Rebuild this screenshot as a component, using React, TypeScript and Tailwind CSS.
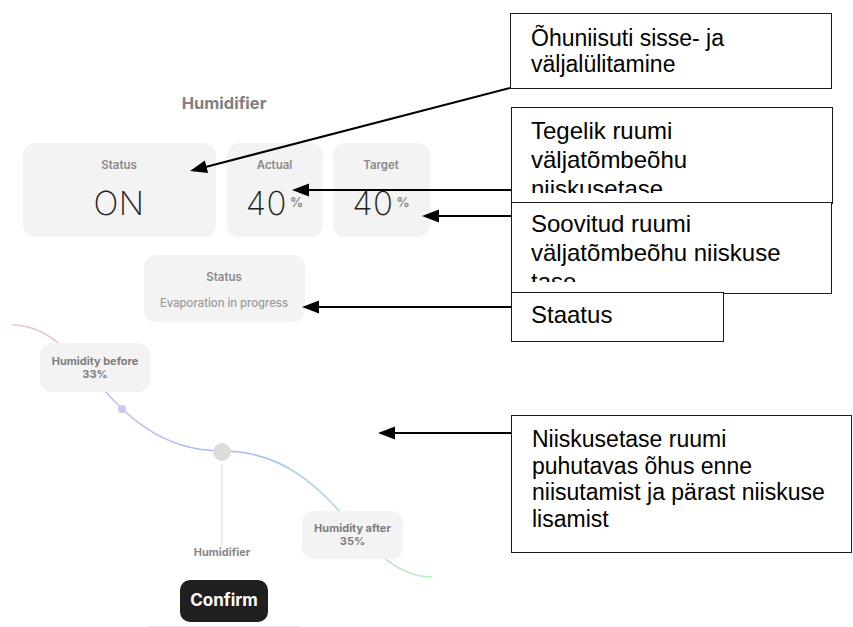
import React from "react";

type ArrowProps = { x1: number; y1: number; x2: number; y2: number };

// callout arrow: line from the tail, filled triangle at the tip
function Arrow({ x1, y1, x2, y2 }: ArrowProps) {
  const len = 17;
  const half = 6.5;
  const dx = x2 - x1;
  const dy = y2 - y1;
  const d = Math.hypot(dx, dy);
  const ux = dx / d;
  const uy = dy / d;
  const bx = x2 - ux * len;
  const by = y2 - uy * len;
  const pts = `${x2},${y2} ${bx - uy * half},${by + ux * half} ${bx + uy * half},${by - ux * half}`;
  return (
    <g>
      <line x1={x1} y1={y1} x2={bx + ux * 2} y2={by + uy * 2} stroke="#000" strokeWidth={2} />
      <polygon points={pts} fill="#000" />
    </g>
  );
}

function StatCard({ label, value, unit, width }: { label: string; value: string; unit?: string; width: string }) {
  return (
    <div className={`${width} h-[94px] rounded-[12px] bg-[#f3f3f3] flex flex-col items-center pt-[15px]`}>
      <div className="text-[11.5px] leading-[14px] font-semibold text-[#8a8a8a]">{label}</div>
      <div className="mt-[15px] flex items-start">
        <span className="text-[33px] leading-[32px] font-extralight text-[#222222] tracking-[0.5px]">{value}</span>
        {unit && <span className="ml-[3px] mt-[9px] text-[13px] leading-[13px] font-bold text-[#8a8a8a]">{unit}</span>}
      </div>
    </div>
  );
}

// text box like a slide annotation: inner area clips the overflowing line
function Callout({ className, inner, lines }: { className: string; inner: string; lines: string[] }) {
  return (
    <div
      className={`absolute bg-white border-[1.5px] border-[#1a1a1a] font-['Liberation_Sans',Arial,sans-serif] text-black ${className}`}
    >
      <div className={`overflow-hidden ${inner}`}>
        {lines.map((l) => (
          <div key={l} className="whitespace-nowrap">
            {l}
          </div>
        ))}
      </div>
    </div>
  );
}

export default function App() {
  return (
    <div className="relative w-[853px] h-[627px] bg-white overflow-hidden font-['Inter',sans-serif]">
      {/* App screen */}
      <div className="w-[448px] flex flex-col items-center pt-[93px]">
        <div className="text-[16.5px] leading-5 font-bold text-[#808080]">Humidifier</div>

        <div className="mt-[30px] ml-[4px] flex">
          <StatCard label="Status" value="ON" width="w-[193px]" />
          <div className="w-[11px]" />
          <StatCard label="Actual" value="40" unit="%" width="w-[96px]" />
          <div className="w-[10px]" />
          <StatCard label="Target" value="40" unit="%" width="w-[97px]" />
        </div>

        <div className="mt-[18px] w-[161px] h-[67px] rounded-[12px] bg-[#f3f3f3] flex flex-col items-center pt-[15px]">
          <div className="text-[11.5px] leading-[14px] font-semibold text-[#8a8a8a]">Status</div>
          <div className="mt-[11px] text-[11.3px] leading-4 font-medium text-[#9b9b9b]">Evaporation in progress</div>
        </div>

        {/* humidity flow diagram */}
        <div className="relative w-[448px] h-[258px]">
          <svg className="absolute inset-0" width="448" height="258" viewBox="0 0 448 258">
            <defs>
              <linearGradient id="flow" gradientUnits="userSpaceOnUse" x1="12" y1="0" x2="432" y2="0">
                <stop offset="0" stopColor="#f4c4ce" />
                <stop offset="0.25" stopColor="#c8b9f2" />
                <stop offset="0.5" stopColor="#a9b5fb" />
                <stop offset="0.78" stopColor="#a6d8e2" />
                <stop offset="1" stopColor="#b8f2bf" />
              </linearGradient>
            </defs>
            <path
              d="M12 3 C87.5 3 106.5 129 222 129 C337.5 129 356.5 255 432 255"
              fill="none"
              stroke="url(#flow)"
              strokeWidth={1.5}
            />
            <circle cx="122" cy="87" r="4" fill="#cdc3f1" />
            <line x1="222" y1="143" x2="222" y2="223" stroke="#e4e4e4" strokeWidth={1.5} />
            <circle cx="222" cy="130" r="9" fill="#dddddd" />
          </svg>

          <div className="absolute left-[40px] top-[21px] w-[110px] h-[49px] rounded-[12px] bg-[#f3f3f3] flex flex-col items-center justify-center text-[11px] leading-[13px] font-bold text-[#7d7d7d]">
            <span>Humidity before</span>
            <span>33%</span>
          </div>
          <div className="absolute left-[302px] top-[189px] w-[101px] h-[48px] rounded-[12px] bg-[#f3f3f3] flex flex-col items-center justify-center text-[11px] leading-[13px] font-bold text-[#7d7d7d]">
            <span>Humidity after</span>
            <span>35%</span>
          </div>
          <div className="absolute left-[172px] top-[223px] w-[100px] text-center text-[11px] leading-[14px] font-bold text-[#888888]">
            Humidifier
          </div>
        </div>

        <button className="w-[88px] h-[42px] rounded-[10px] bg-[#1f1f1f] text-white text-[17px] font-bold">
          Confirm
        </button>
        <div className="mt-[4px] w-[153px] h-px bg-[#e6e6e6]" />
      </div>

      {/* Annotation overlay */}
      <svg className="absolute inset-0 pointer-events-none" width="853" height="627" viewBox="0 0 853 627">
        <Arrow x1={510} y1={88} x2={190} y2={171} />
        <Arrow x1={512} y1={190} x2={292} y2={190} />
        <Arrow x1={512} y1={216} x2={422} y2={216} />
        <Arrow x1={511} y1={307} x2={302} y2={307} />
        <Arrow x1={511} y1={433} x2={378} y2={433} />
      </svg>

      <Callout
        className="left-[510px] top-[13px] w-[322px] h-[76px] pl-[20px] pt-[11px] text-[23px] leading-[26px]"
        inner=""
        lines={["Õhuniisuti sisse- ja", "väljalülitamine"]}
      />
      <Callout
        className="left-[511px] top-[107px] w-[322px] h-[97px] pl-[19px] pt-[8px] text-[24px] leading-[29px]"
        inner="h-[77px]"
        lines={["Tegelik ruumi", "väljatõmbeõhu", "niiskusetase"]}
      />
      <Callout
        className="left-[511px] top-[202px] w-[321px] h-[92px] pl-[19px] pt-[6px] text-[24px] leading-[29px]"
        inner="h-[73px]"
        lines={["Soovitud ruumi", "väljatõmbeõhu niiskuse", "tase"]}
      />
      <Callout
        className="left-[511px] top-[292px] w-[213px] h-[50px] pl-[19px] pt-[7px] text-[24px] leading-[29px]"
        inner=""
        lines={["Staatus"]}
      />
      <Callout
        className="left-[511px] top-[415px] w-[341px] h-[138px] pl-[20px] pt-[10px] text-[23px] leading-[26.7px]"
        inner=""
        lines={["Niiskusetase ruumi", "puhutavas õhus enne", "niisutamist ja pärast niiskuse", "lisamist"]}
      />
    </div>
  );
}
